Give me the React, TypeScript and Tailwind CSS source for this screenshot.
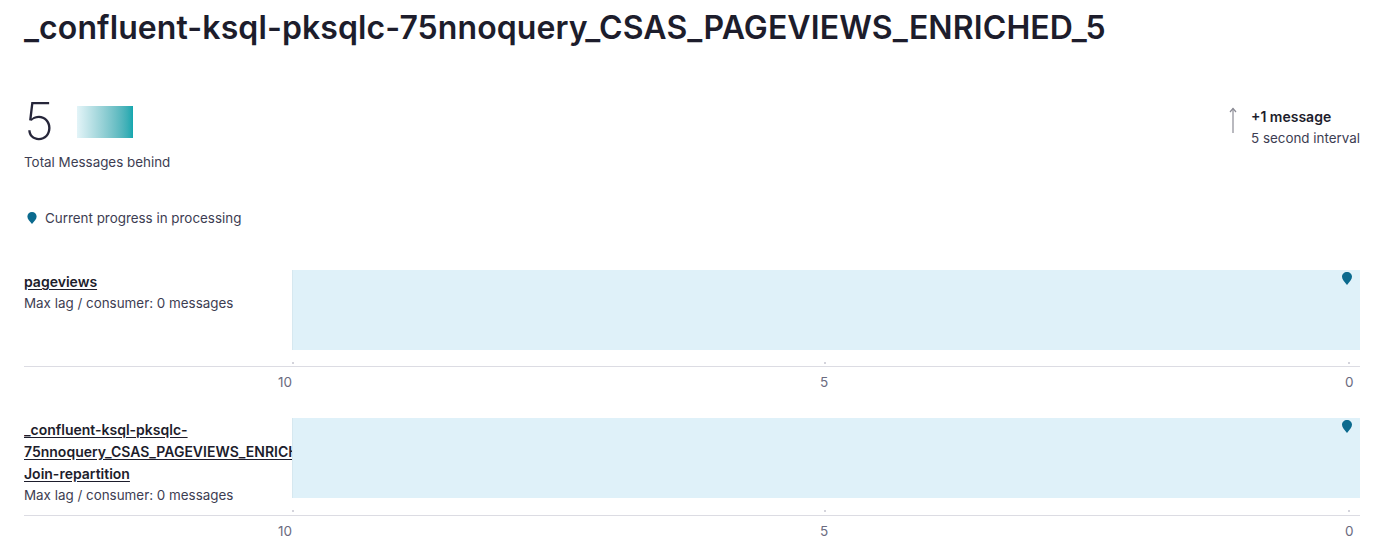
const font = { fontFamily: "Inter, 'Noto Sans', sans-serif" };

function Pin({ className }: { className?: string }) {
  return (
    <svg className={className} viewBox="0 0 10 13" fill="#0b6a8e">
      <path d="M5 0C2.2 0 0 2.1 0 4.8 0 7.6 2.6 10 5 13c2.4-3 5-5.4 5-8.2C10 2.1 7.8 0 5 0z" />
    </svg>
  );
}

function ThinArrowUp() {
  return (
    <svg className="h-[26px] w-[8px]" viewBox="0 0 8 26" fill="none" stroke="#8a8a94" strokeWidth="1.2">
      <path d="M4 1.5V26" />
      <path d="M1 5L4 1.5 7 5" />
    </svg>
  );
}

type Topic = { name: string; lag: number };

const topics: Topic[] = [
  { name: "pageviews", lag: 0 },
  { name: "_confluent-ksql-pksqlc-75nnoquery_CSAS_PAGEVIEWS_ENRICHED_5-Join-repartition", lag: 0 },
];

function Axis() {
  return (
    <div className="relative ml-[268px] h-[51px] text-[13.5px] text-[#6b6b80]">
      <span className="absolute left-[-14px] top-[5px] leading-5">10</span>
      <span className="absolute left-[528px] top-[5px] leading-5">5</span>
      <span className="absolute left-[1053px] top-[5px] leading-5">0</span>
    </div>
  );
}

function TopicRow({ topic }: { topic: Topic }) {
  return (
    <div>
      <div className="flex border-b border-[#dcdce3]">
        <div className="w-[268px] shrink-0 overflow-hidden pb-[9px] leading-[22px]">
          <a className="text-sm font-semibold text-[#1d1d2c] underline underline-offset-2" href="#">
            {topic.name}
          </a>
          <div className="text-[13.4px] text-[#3d3d52]">Max lag / consumer: {topic.lag} messages</div>
        </div>
        <div className="relative h-[96px] flex-1">
          <div className="h-[80px] border-l border-[#d6e8f0] bg-[#dff1f9]" />
          <Pin className="absolute right-[8px] top-[2px] h-[13px] w-[10px]" />
          <div className="absolute left-0 top-[92px] h-[2px] w-[2px] bg-[#d4d4dc]" />
          <div className="absolute left-[532px] top-[92px] h-[2px] w-[2px] bg-[#d4d4dc]" />
          <div className="absolute left-[1056px] top-[92px] h-[2px] w-[2px] bg-[#d4d4dc]" />
        </div>
      </div>
      <Axis />
    </div>
  );
}

export default function App() {
  return (
    <div className="h-[548px] overflow-hidden bg-white pl-6 pr-[14px] pt-[6px] text-[#1d1d2c]" style={font}>
      <h1 className="text-[32px] font-semibold leading-[44px] tracking-[0.1px]">
        _confluent-ksql-pksqlc-75nnoquery_CSAS_PAGEVIEWS_ENRICHED_5
      </h1>

      <div className="mt-[46px] flex items-start justify-between">
        <div>
          <div className="flex items-center gap-[23px]">
            <span className="text-[52px] font-extralight leading-[52px] text-[#26263a]">5</span>
            <div className="h-[32px] w-[56px] bg-gradient-to-r from-[#e3f4f8] to-[#10a7af]" />
          </div>
          <div className="mt-[4px] text-[13.4px] leading-5 text-[#3d3d52]">Total Messages behind</div>
        </div>
        <div className="mt-[11px] flex items-start gap-[14px]">
          <ThinArrowUp />
          <div className="leading-[22px]">
            <div className="text-sm font-semibold text-[#1d1d2c]">+1 message</div>
            <div className="text-[13.4px] text-[#3d3d52]">5 second interval</div>
          </div>
        </div>
      </div>

      <div className="mt-[36px] flex items-center gap-[8px] text-[13.4px] leading-5 text-[#3d3d52]">
        <Pin className="ml-[3px] h-[12px] w-[10px]" />
        Current progress in processing
      </div>

      <div className="mt-[42px]">
        {topics.map((t) => (
          <TopicRow key={t.name} topic={t} />
        ))}
      </div>
    </div>
  );
}
